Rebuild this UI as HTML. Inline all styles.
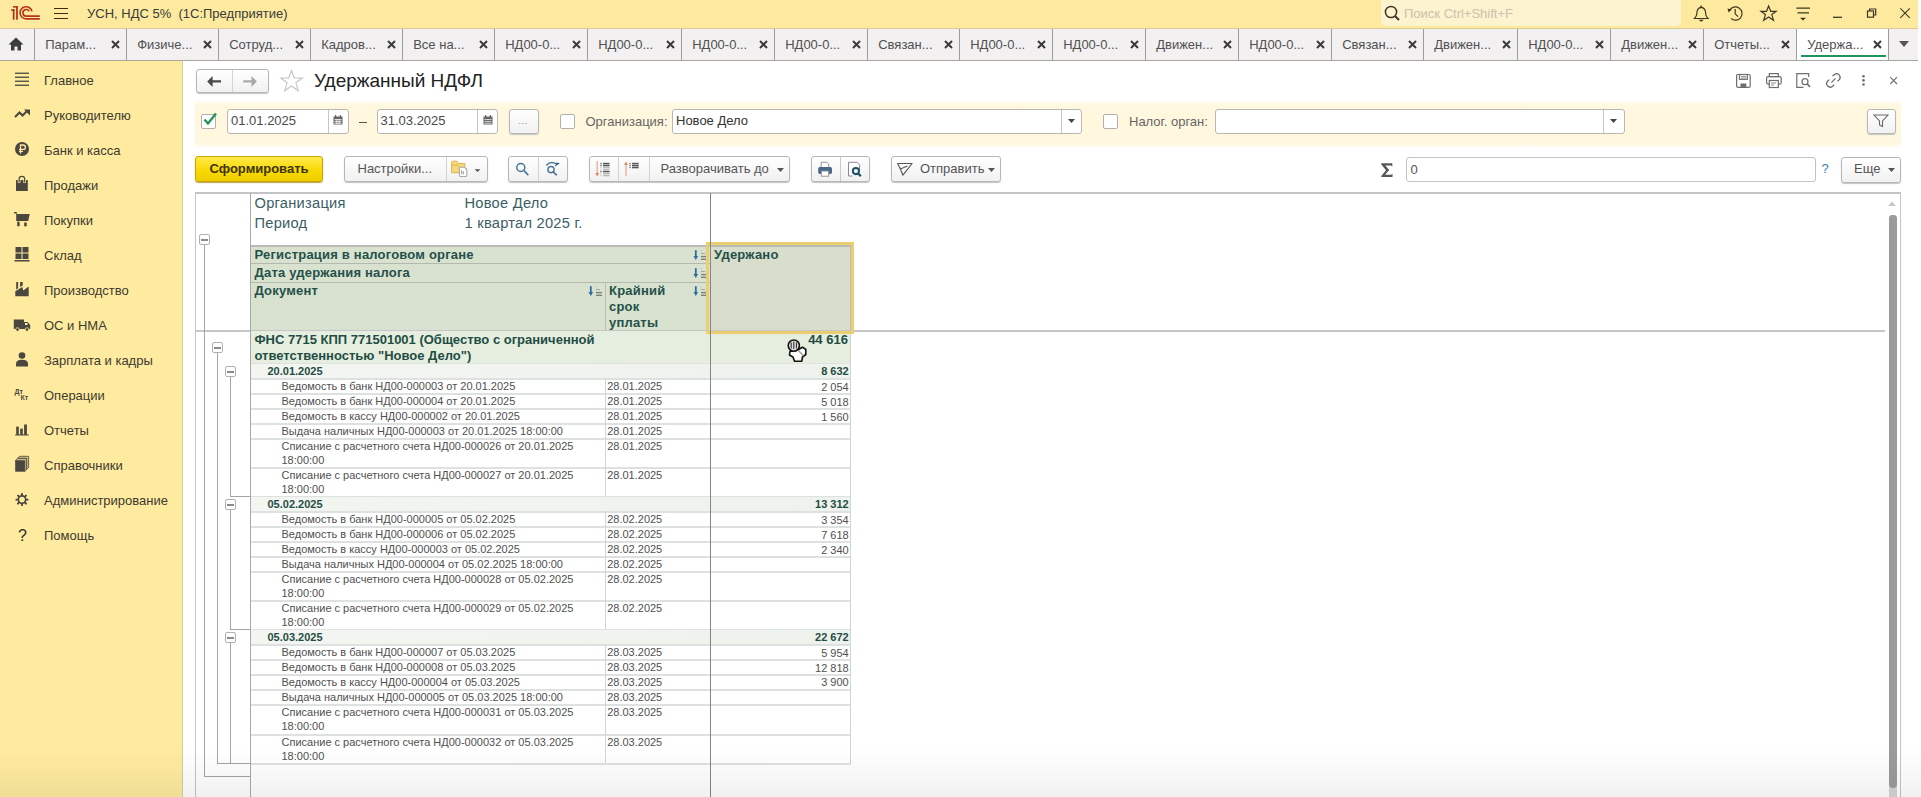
<!DOCTYPE html><html><head><meta charset="utf-8"><style>*{box-sizing:border-box;margin:0;padding:0}
html,body{width:1921px;height:797px;overflow:hidden;background:#fff;font-family:"Liberation Sans",sans-serif;color:#333}
.a{position:absolute}
svg{display:block}
#title{left:0;top:0;width:1918px;height:28px;background:#fdea9e}
#tabs{left:0;top:28px;width:1918px;height:33px;background:#f2f0f1;border-top:1px solid #d9cb92;border-bottom:1px solid #a9a69c}
.tab{position:absolute;top:0;height:31px;font-size:13px;color:#505050}
.tab:before{content:"";position:absolute;left:-1px;top:0;width:1px;height:31px;background:#9d9d9f}
.tab.act{background:#fff}
.tab .tt{position:absolute;left:10.2px;top:8px;white-space:nowrap}
.tab .tx{position:absolute;right:7px;top:11px}
#side{left:0;top:61px;width:183px;height:736px;background:#ffeb9f;border-right:1px solid #d6cc9e}
.si{position:absolute;left:44px;font-size:13px;color:#3d3a30;white-space:nowrap;margin-top:0.5px}
#filter{left:195px;top:101px;width:1706px;height:46px;background:linear-gradient(#fffdf5,#fff8de 5px,#fff8de 40px,#fffbec)}
.inp{position:absolute;background:#fff;border:1px solid #b9b6b4;border-radius:3px;font-size:13px;color:#444;white-space:nowrap}
.btn{position:absolute;border:1px solid #b7b7b9;border-radius:3px;background:linear-gradient(#fff,#f1f1f1);box-shadow:0 1px 1px #c4c4c4;font-size:13px;color:#444;white-space:nowrap}
.chk{position:absolute;width:15px;height:15px;border:1px solid #b2b0ae;border-radius:2px;background:#fff}
.lbl{position:absolute;font-size:13px;color:#666;white-space:nowrap}
.vd{position:absolute;top:0;bottom:0;width:1px;background:#c8c8ca}
.rh{position:absolute;font-size:14.67px;color:#3b5e64;white-space:nowrap;letter-spacing:0.25px}
.hc{position:absolute;font-size:13px;font-weight:bold;color:#24504a;white-space:nowrap;letter-spacing:0.2px}
.gt{position:absolute;font-size:13px;font-weight:bold;color:#1f4d44;white-space:nowrap;line-height:16px}
.dt{position:absolute;font-size:11px;font-weight:bold;color:#1f4d44;white-space:nowrap}
.rt{position:absolute;font-size:11px;color:#505050;white-space:nowrap;line-height:14px}
</style></head><body>
<div id="title" class="a">
  <svg class="a" style="left:0;top:0" width="46" height="26" viewBox="0 0 46 26">
    <g fill="#ad2f1b">
      <rect x="12.8" y="9.3" width="1.7" height="10.4"/><rect x="11.1" y="9.3" width="3.4" height="1.5"/>
      <rect x="16.1" y="6.1" width="1.7" height="13.6"/><rect x="13" y="6.1" width="4.8" height="1.5"/>
    </g>
    <g fill="none" stroke="#b6361d" stroke-width="1.6">
      <path d="M32 11.4 A6.05 6.05 0 1 0 26.15 18.85 H39.8"/>
      <path d="M29.2 11.4 A3.3 3.3 0 1 0 26.2 16.1 H39.8"/>
    </g>
  </svg>
  <div class="a" style="left:54px;top:8px;width:14px;height:1px;background:#3b2e12"></div>
  <div class="a" style="left:54px;top:13px;width:14px;height:1px;background:#3b2e12"></div>
  <div class="a" style="left:54px;top:18px;width:14px;height:1px;background:#3b2e12"></div>
  <div class="a" style="left:87px;top:6px;font-size:13px;color:#3a3a3a;white-space:pre">УСН, НДС 5%  (1С:Предприятие)</div>
  <div class="a" style="left:1381px;top:0;width:300px;height:26px;background:#fdf3cf;border-radius:0 0 5px 5px"></div>
  <svg class="a" style="left:1384px;top:5px" width="17" height="17" viewBox="0 0 17 17"><circle cx="7" cy="7" r="5.6" fill="none" stroke="#3b3526" stroke-width="1.5"/><path d="M11 11 L15 15" stroke="#3b3526" stroke-width="2"/></svg>
  <div class="a" style="left:1404px;top:6px;font-size:13px;color:#c9c2ad;white-space:nowrap">Поиск Ctrl+Shift+F</div>
<svg class="a" style="left:1685px;top:0" width="233" height="28" viewBox="1685 0 233 28">
  <g fill="none" stroke="#3e3726" stroke-width="1.2">
   <!-- bell -->
   <path d="M1694.5 18.5 H1708 Q1705.8 16.5 1705.6 13.5 V12.5 Q1705.3 8 1701.2 7.4 Q1697.2 8 1696.9 12.5 V13.5 Q1696.7 16.5 1694.5 18.5 Z"/>
   <circle cx="1701.2" cy="6.5" r="0.9" fill="#3e3726" stroke="none"/>
   <!-- history -->
   <path d="M1729.6 10.5 A6.6 6.6 0 1 1 1731 18.4"/>
   <path d="M1735.2 9 V13.8 L1738 16.6"/>
   <!-- star -->
   <path d="M1768.6 6 L1770.7 11.3 H1776.2 L1771.8 14.6 L1773.5 20.3 L1768.6 16.9 L1763.7 20.3 L1765.4 14.6 L1761 11.3 H1766.5 Z"/>
   <!-- filter list -->
   <path d="M1796.3 8.2 H1810 M1797.5 12.8 H1809"/>
   <!-- minimize -->
   <path d="M1833 17.3 H1842" stroke-width="1.3"/>
   <!-- restore -->
   <rect x="1867.5" y="11" width="6" height="6.2"/>
   <path d="M1869.6 11 V9 H1875.7 V15 H1873.5"/>
   <!-- close -->
   <path d="M1900.3 8.3 L1909.8 17.8 M1909.8 8.3 L1900.3 17.8" stroke-width="1.1"/>
  </g>
  <g fill="#3e3726">
   <path d="M1698.5 19.8 H1704 L1701.2 21.8 Z"/>
   <path d="M1727.5 8.6 L1731.8 9.6 L1728.6 12.6 Z"/>
   <path d="M1800 17.8 H1806 L1803 20.6 Z"/>
  </g>
 </svg>
</div>

<div id="tabs" class="a">
<svg class="a" style="left:8px;top:8px" width="16" height="14" viewBox="0 0 16 14"><path d="M8 0.5 L15.5 7.5 H13 V13.5 H9.5 V9.5 H6.5 V13.5 H3 V7.5 H0.5 Z" fill="#3d3d3f"/></svg>
<div class="tab" style="left:35px;width:92px">
<span class="tt">Парам...</span>
<svg class="tx" width="9" height="9" viewBox="0 0 9 9"><path d="M1 1 L8 8 M8 1 L1 8" stroke="#3a3a3a" stroke-width="2"/></svg>
</div>
<div class="tab" style="left:127px;width:92px">
<span class="tt">Физиче...</span>
<svg class="tx" width="9" height="9" viewBox="0 0 9 9"><path d="M1 1 L8 8 M8 1 L1 8" stroke="#3a3a3a" stroke-width="2"/></svg>
</div>
<div class="tab" style="left:219px;width:92px">
<span class="tt">Сотруд...</span>
<svg class="tx" width="9" height="9" viewBox="0 0 9 9"><path d="M1 1 L8 8 M8 1 L1 8" stroke="#3a3a3a" stroke-width="2"/></svg>
</div>
<div class="tab" style="left:311px;width:92px">
<span class="tt">Кадров...</span>
<svg class="tx" width="9" height="9" viewBox="0 0 9 9"><path d="M1 1 L8 8 M8 1 L1 8" stroke="#3a3a3a" stroke-width="2"/></svg>
</div>
<div class="tab" style="left:403px;width:92px">
<span class="tt">Все на...</span>
<svg class="tx" width="9" height="9" viewBox="0 0 9 9"><path d="M1 1 L8 8 M8 1 L1 8" stroke="#3a3a3a" stroke-width="2"/></svg>
</div>
<div class="tab" style="left:495px;width:93px">
<span class="tt">НД00-0...</span>
<svg class="tx" width="9" height="9" viewBox="0 0 9 9"><path d="M1 1 L8 8 M8 1 L1 8" stroke="#3a3a3a" stroke-width="2"/></svg>
</div>
<div class="tab" style="left:588px;width:94px">
<span class="tt">НД00-0...</span>
<svg class="tx" width="9" height="9" viewBox="0 0 9 9"><path d="M1 1 L8 8 M8 1 L1 8" stroke="#3a3a3a" stroke-width="2"/></svg>
</div>
<div class="tab" style="left:682px;width:93px">
<span class="tt">НД00-0...</span>
<svg class="tx" width="9" height="9" viewBox="0 0 9 9"><path d="M1 1 L8 8 M8 1 L1 8" stroke="#3a3a3a" stroke-width="2"/></svg>
</div>
<div class="tab" style="left:775px;width:93px">
<span class="tt">НД00-0...</span>
<svg class="tx" width="9" height="9" viewBox="0 0 9 9"><path d="M1 1 L8 8 M8 1 L1 8" stroke="#3a3a3a" stroke-width="2"/></svg>
</div>
<div class="tab" style="left:868px;width:92px">
<span class="tt">Связан...</span>
<svg class="tx" width="9" height="9" viewBox="0 0 9 9"><path d="M1 1 L8 8 M8 1 L1 8" stroke="#3a3a3a" stroke-width="2"/></svg>
</div>
<div class="tab" style="left:960px;width:93px">
<span class="tt">НД00-0...</span>
<svg class="tx" width="9" height="9" viewBox="0 0 9 9"><path d="M1 1 L8 8 M8 1 L1 8" stroke="#3a3a3a" stroke-width="2"/></svg>
</div>
<div class="tab" style="left:1053px;width:93px">
<span class="tt">НД00-0...</span>
<svg class="tx" width="9" height="9" viewBox="0 0 9 9"><path d="M1 1 L8 8 M8 1 L1 8" stroke="#3a3a3a" stroke-width="2"/></svg>
</div>
<div class="tab" style="left:1146px;width:93px">
<span class="tt">Движен...</span>
<svg class="tx" width="9" height="9" viewBox="0 0 9 9"><path d="M1 1 L8 8 M8 1 L1 8" stroke="#3a3a3a" stroke-width="2"/></svg>
</div>
<div class="tab" style="left:1239px;width:93px">
<span class="tt">НД00-0...</span>
<svg class="tx" width="9" height="9" viewBox="0 0 9 9"><path d="M1 1 L8 8 M8 1 L1 8" stroke="#3a3a3a" stroke-width="2"/></svg>
</div>
<div class="tab" style="left:1332px;width:92px">
<span class="tt">Связан...</span>
<svg class="tx" width="9" height="9" viewBox="0 0 9 9"><path d="M1 1 L8 8 M8 1 L1 8" stroke="#3a3a3a" stroke-width="2"/></svg>
</div>
<div class="tab" style="left:1424px;width:94px">
<span class="tt">Движен...</span>
<svg class="tx" width="9" height="9" viewBox="0 0 9 9"><path d="M1 1 L8 8 M8 1 L1 8" stroke="#3a3a3a" stroke-width="2"/></svg>
</div>
<div class="tab" style="left:1518px;width:93px">
<span class="tt">НД00-0...</span>
<svg class="tx" width="9" height="9" viewBox="0 0 9 9"><path d="M1 1 L8 8 M8 1 L1 8" stroke="#3a3a3a" stroke-width="2"/></svg>
</div>
<div class="tab" style="left:1611px;width:93px">
<span class="tt">Движен...</span>
<svg class="tx" width="9" height="9" viewBox="0 0 9 9"><path d="M1 1 L8 8 M8 1 L1 8" stroke="#3a3a3a" stroke-width="2"/></svg>
</div>
<div class="tab" style="left:1704px;width:93px">
<span class="tt">Отчеты...</span>
<svg class="tx" width="9" height="9" viewBox="0 0 9 9"><path d="M1 1 L8 8 M8 1 L1 8" stroke="#3a3a3a" stroke-width="2"/></svg>
</div>
<div class="tab act" style="left:1797px;width:92px">
<span class="tt">Удержа...</span>
<svg class="tx" width="9" height="9" viewBox="0 0 9 9"><path d="M1 1 L8 8 M8 1 L1 8" stroke="#3a3a3a" stroke-width="2"/></svg>
<div class="a" style="left:4px;top:26px;width:85px;height:2px;background:#23935c"></div>
</div>
<div class="tab" style="left:1889px;width:29px"><svg class="a" style="left:10px;top:12px" width="10" height="6" viewBox="0 0 10 6"><path d="M0 0 H10 L5 6Z" fill="#555"/></svg></div>
</div>
<div id="side" class="a">
<!-- icons: coordinates relative to sidebar (top=61) -->
<svg class="a" style="left:0;top:0" width="183" height="500" viewBox="0 61 183 500">
 <g fill="#4a4640" stroke="none">
  <!-- Главное -->
  <rect x="15" y="72.6" width="14" height="1.3"/><rect x="15" y="76.6" width="14" height="1.3"/><rect x="15" y="80.6" width="14" height="1.3"/><rect x="15" y="84.6" width="14" height="1.3"/>
  <!-- Руководителю -->
  <path d="M15 117 L19.5 112.5 L22.5 115.5 L26.5 111.5" fill="none" stroke="#4a4640" stroke-width="2"/>
  <path d="M24 109.5 H30 V115.5 Z"/>
  <!-- Банк -->
  <circle cx="22" cy="149" r="7"/>
  <path d="M20.5 153.5 V145 H23.2 A2.2 2.2 0 0 1 23.2 149.4 H19 M19 151.3 H23" fill="none" stroke="#ffeb9f" stroke-width="1.3"/>
  <!-- Продажи -->
  <rect x="16" y="180.1" width="11.8" height="10.9"/>
  <path d="M19.1 183 V179.2 A2.8 2.8 0 0 1 24.7 179.2 V183" fill="none" stroke="#ffeb9f" stroke-width="2.6"/>
  <path d="M19.1 182.6 V179.2 A2.8 2.8 0 0 1 24.7 179.2 V182.6" fill="none" stroke="#4a4640" stroke-width="1.2"/>
  <!-- Покупки -->
  <path d="M14.1 212 H16.8 V214.1 H29.7 L28.2 221 H16.2 V213.6 H14.1 Z"/>
  <rect x="17.2" y="221.6" width="2.4" height="4.6"/><rect x="24.2" y="222.5" width="2.5" height="3.8"/>
  <!-- Склад -->
  <rect x="15.5" y="247" width="6" height="5.5"/><rect x="22.5" y="247" width="6" height="5.5"/>
  <rect x="15.5" y="253.5" width="6" height="5.5"/><rect x="22.5" y="253.5" width="6" height="5.5"/>
  <rect x="14.5" y="260" width="15" height="1.5"/>
  <!-- Производство -->
  <path d="M15.3 296.3 V291.2 L22.3 287 L23.3 290.6 L28.7 286.4 V296.3 Z"/>
  <path d="M16.2 282 H18.1 V288.2 L16.2 289.4 Z"/>
  <path d="M20.1 282 H22.7 V285.5 L20.1 287 Z"/>
  <!-- ОС и НМА -->
  <path d="M13.8 319.5 H24 V322 H27.5 L30.2 325 V329 H13.8 Z"/>
  <circle cx="17.5" cy="329.5" r="1.8" stroke="#ffeb9f" stroke-width="0.8"/><circle cx="27" cy="329.5" r="1.8" stroke="#ffeb9f" stroke-width="0.8"/>
  <rect x="25" y="323" width="2.5" height="2" fill="#ffeb9f"/>
  <!-- Зарплата -->
  <circle cx="22" cy="355.5" r="3.3"/>
  <path d="M16 366.5 V364 Q16 359.8 22 359.8 Q28 359.8 28 364 V366.5 Z"/>
  <!-- Операции -->
  <text x="14.5" y="394" font-size="7" font-weight="bold" font-family="Liberation Sans" fill="#4a4640">Дт</text>
  <text x="20.5" y="400" font-size="7" font-weight="bold" font-family="Liberation Sans" fill="#4a4640">Кт</text>
  <!-- Отчеты -->
  <rect x="16.2" y="426.6" width="2.6" height="8.3"/><rect x="20.2" y="428.6" width="2.6" height="6.3"/><rect x="24.1" y="424.5" width="2.8" height="10.4"/>
  <rect x="15.2" y="434.4" width="13.4" height="1.1"/>
  <!-- Справочники -->
  <path d="M19.8 456.3 H28.6 V467.5 L26.6 469.2 V458.3 H17.5 Z" fill="#d9c78a" stroke="#4a4640" stroke-width="0.8"/>
  <path d="M17.6 458.4 H26.6 V469.6 L24.8 471.5 V460.7 H15.2 Z" fill="#c9b986" stroke="#4a4640" stroke-width="0.8"/>
  <rect x="15.2" y="460.7" width="9.6" height="11"/>
  <!-- Администрирование -->
  <g transform="translate(22 499.6)"><circle r="3.7" fill="none" stroke="#4a4640" stroke-width="1.7"/><rect x="-0.95" y="-6.5" width="1.9" height="3.2" rx="0.6" transform="rotate(0)"/><rect x="-0.95" y="-6.5" width="1.9" height="3.2" rx="0.6" transform="rotate(45)"/><rect x="-0.95" y="-6.5" width="1.9" height="3.2" rx="0.6" transform="rotate(90)"/><rect x="-0.95" y="-6.5" width="1.9" height="3.2" rx="0.6" transform="rotate(135)"/><rect x="-0.95" y="-6.5" width="1.9" height="3.2" rx="0.6" transform="rotate(180)"/><rect x="-0.95" y="-6.5" width="1.9" height="3.2" rx="0.6" transform="rotate(225)"/><rect x="-0.95" y="-6.5" width="1.9" height="3.2" rx="0.6" transform="rotate(270)"/><rect x="-0.95" y="-6.5" width="1.9" height="3.2" rx="0.6" transform="rotate(315)"/></g>
 </g>
</svg>
<div class="a" style="left:18px;top:466px;font-size:16px;color:#2a2a2a;font-weight:normal">?</div>
<div class="si" style="top:11.2px">Главное</div>
<div class="si" style="top:46.2px">Руководителю</div>
<div class="si" style="top:81.2px">Банк и касса</div>
<div class="si" style="top:116.2px">Продажи</div>
<div class="si" style="top:151.2px">Покупки</div>
<div class="si" style="top:186.2px">Склад</div>
<div class="si" style="top:221.2px">Производство</div>
<div class="si" style="top:256.2px">ОС и НМА</div>
<div class="si" style="top:291.2px">Зарплата и кадры</div>
<div class="si" style="top:326.2px">Операции</div>
<div class="si" style="top:361.2px">Отчеты</div>
<div class="si" style="top:396.2px">Справочники</div>
<div class="si" style="top:431.2px">Администрирование</div>
<div class="si" style="top:466.2px">Помощь</div>
</div>

<!-- nav buttons -->
<div class="btn" style="left:196px;top:69px;width:73px;height:24px;border-radius:3px"></div>
<div class="a" style="left:232px;top:70px;width:1px;height:22px;background:#d4d4d6"></div>
<svg class="a" style="left:206px;top:75px" width="16" height="13" viewBox="0 0 16 13"><path d="M1.2 6.4 L6.6 1 V5.2 H15 V7.6 H6.6 V11.9 Z" fill="#4a4a4c"/></svg>
<svg class="a" style="left:242px;top:75px" width="16" height="13" viewBox="0 0 16 13"><path d="M14.9 6.4 L9.5 1 V5.2 H1.2 V7.6 H9.5 V11.9 Z" fill="#a9a9ab"/></svg>
<!-- star -->
<svg class="a" style="left:279px;top:69px" width="25" height="24" viewBox="0 0 25 24"><path d="M12.5 1.5 L15.3 9 H23.3 L16.9 13.8 L19.3 21.8 L12.5 17 L5.7 21.8 L8.1 13.8 L1.7 9 H9.7 Z" fill="none" stroke="#c4c4c6" stroke-width="1.1"/></svg>
<!-- title -->
<div class="a" style="left:314px;top:70.4px;font-size:19px;color:#222;white-space:nowrap">Удержанный НДФЛ</div>
<!-- right icons -->
<svg class="a" style="left:1730px;top:68px" width="175" height="26" viewBox="1730 68 175 26">
 <g fill="none" stroke="#6e6e70" stroke-width="1.2">
  <!-- save -->
  <rect x="1736.6" y="74.5" width="13.6" height="12.8" rx="1.2"/>
  <rect x="1739.5" y="74.5" width="7.8" height="4.8"/>
  <path d="M1741 76.5 H1746 M1741 78 H1746" stroke-width="0.7"/>
  <rect x="1740.5" y="83.5" width="5.8" height="3.8" fill="#6e6e70" stroke="none"/>
  <!-- print -->
  <rect x="1769.3" y="73.6" width="9" height="3"/>
  <rect x="1766.6" y="76.6" width="14.6" height="7.5" rx="1.5"/>
  <rect x="1769.3" y="80.5" width="9" height="7" fill="#fff"/>
  <path d="M1771 83 H1776 M1771 85 H1774" stroke-width="0.8"/>
  <!-- preview -->
  <path d="M1808.7 77 V73.6 H1796.8 V87.4 H1803.5"/>
  <circle cx="1805" cy="81.7" r="3"/>
  <path d="M1807.2 84 L1810 86.9" stroke-width="1.6"/>
  <!-- link -->
  <path d="M1829.2 79.6 L1827.6 81.2 A3.54 3.54 0 0 0 1832.6 86.2 L1834.2 84.6" stroke-width="1.3"/>
  <path d="M1832.5 76.1 L1834.46 74.44 A3.6 3.6 0 0 1 1839.46 79.44 L1837.6 81.3" stroke-width="1.3"/>
  <path d="M1831.4 82.6 L1835.5 78.3" stroke-width="1.2"/>
  <!-- close -->
  <path d="M1890.3 77.2 L1897 84 M1897 77.2 L1890.3 84" stroke-width="1.1"/>
 </g>
 <g fill="#6e6e70"><circle cx="1863.5" cy="76.3" r="1.3"/><circle cx="1863.5" cy="80.4" r="1.3"/><circle cx="1863.5" cy="84.5" r="1.3"/></g>
</svg>
<!-- FILTER PANEL -->
<div id="filter" class="a"></div>
<div class="chk" style="left:201px;top:114px"></div>
<svg class="a" style="left:202px;top:111px" width="16" height="16" viewBox="0 0 16 16"><path d="M2.5 8.5 L6 12.5 L14 2.5" fill="none" stroke="#22955a" stroke-width="2.4"/></svg>
<div class="inp" style="left:227px;top:109px;width:122px;height:25px"><span class="a" style="left:3px;top:3.3px;color:#4a4a4a">01.01.2025</span></div>
<div class="a" style="left:327.5px;top:110px;width:1px;height:23px;background:#c6c6c6"></div>
<svg class="a" style="left:333px;top:115px" width="10" height="10" viewBox="0 0 10 10"><rect x="0.5" y="1.5" width="9" height="8" fill="#666"/><path d="M1.5 4.5 H8.5 M1.5 6.5 H8.5 M1.5 8.3 H8.5 M3.3 4 V9 M5 4 V9 M6.8 4 V9" stroke="#fff" stroke-width="0.7"/><rect x="2" y="0" width="1.2" height="2.5" fill="#666"/><rect x="6.8" y="0" width="1.2" height="2.5" fill="#666"/></svg>
<div class="a" style="left:359px;top:121.5px;width:8px;height:1.3px;background:#555"></div>
<div class="inp" style="left:376.5px;top:109px;width:121.5px;height:25px"><span class="a" style="left:3px;top:3.3px;color:#4a4a4a">31.03.2025</span></div>
<div class="a" style="left:477px;top:110px;width:1px;height:23px;background:#c6c6c6"></div>
<svg class="a" style="left:482.5px;top:115px" width="10" height="10" viewBox="0 0 10 10"><rect x="0.5" y="1.5" width="9" height="8" fill="#666"/><path d="M1.5 4.5 H8.5 M1.5 6.5 H8.5 M1.5 8.3 H8.5" stroke="#fff" stroke-width="0.7"/><rect x="2" y="0" width="1.2" height="2.5" fill="#666"/><rect x="6.8" y="0" width="1.2" height="2.5" fill="#666"/></svg>
<div class="btn" style="left:508.5px;top:108.5px;width:30px;height:25px"><span class="a" style="left:9px;top:6px;font-size:9px;color:#777;letter-spacing:0.5px">...</span></div>
<div class="chk" style="left:559.5px;top:114px"></div>
<div class="lbl" style="left:585.5px;top:114px">Организация:</div>
<div class="inp" style="left:672px;top:109px;width:410px;height:25px"><span class="a" style="left:3px;top:3.3px;color:#333">Новое Дело</span></div>
<div class="a" style="left:1060.5px;top:110px;width:1px;height:23px;background:#c6c6c6"></div>
<svg class="a" style="left:1068px;top:119px" width="7" height="4" viewBox="0 0 7 4"><path d="M0 0 H7 L3.5 4Z" fill="#444"/></svg>
<div class="chk" style="left:1103px;top:114px"></div>
<div class="lbl" style="left:1129px;top:114px">Налог. орган:</div>
<div class="inp" style="left:1214.5px;top:109px;width:410px;height:25px"></div>
<div class="a" style="left:1603px;top:110px;width:1px;height:23px;background:#c6c6c6"></div>
<svg class="a" style="left:1610px;top:119px" width="7" height="4" viewBox="0 0 7 4"><path d="M0 0 H7 L3.5 4Z" fill="#444"/></svg>
<div class="btn" style="left:1866.5px;top:108.5px;width:29px;height:25px"></div>
<svg class="a" style="left:1873px;top:114px" width="16" height="14" viewBox="0 0 16 14"><path d="M1 1 H15 L9.5 7 V12.5 L6.5 11 V7 Z" fill="none" stroke="#6a6a6c" stroke-width="1.1"/></svg>
<!-- TOOLBAR -->
<div class="a" style="left:195px;top:156px;width:128px;height:26px;border:1px solid #c9a700;border-radius:3px;background:linear-gradient(#ffe94a,#f8d800 60%,#f0cc00);box-shadow:0 1px 1px #b9a450"></div>
<div class="a" style="left:209.5px;top:161px;font-size:13px;font-weight:bold;color:#3b3300;white-space:nowrap">Сформировать</div>
<div class="btn" style="left:343.5px;top:156px;width:144px;height:26px"></div>
<div class="a" style="left:446px;top:157px;width:1px;height:24px;background:#d2d2d4"></div>
<div class="a" style="left:357.5px;top:161px;font-size:13px;color:#555;white-space:nowrap">Настройки...</div>
<svg class="a" style="left:446px;top:158px" width="42" height="22" viewBox="446 158 42 22">
 <path d="M451.6 172.7 V162.6 Q451.6 161.2 453 161.2 H456.2 Q457.4 161.2 458 162.6 L458.4 163.5 H464.9 V172.7 Z" fill="#f6d877" stroke="#d8b04e" stroke-width="0.9"/>
 <path d="M451.6 165.2 H458.4" stroke="#d8b04e" stroke-width="0.8"/>
 <path d="M459.4 167.3 H464.6 L466.8 169.5 V175.4 Q466.8 176.5 465.7 176.5 H460.5 Q459.4 176.5 459.4 175.4 Z" fill="#fff" stroke="#a9a9ad" stroke-width="1.1"/>
 <rect x="461.2" y="170.3" width="0.9" height="4" fill="#d77"/><rect x="462.6" y="171.2" width="1.4" height="3.1" fill="#9b9"/>
 <path d="M474.7 169.2 H480.3 L477.5 172.1 Z" fill="#505050"/>
</svg>
<div class="btn" style="left:508px;top:156px;width:60px;height:26px"></div>
<div class="a" style="left:538px;top:157px;width:1px;height:24px;background:#d2d2d4"></div>
<svg class="a" style="left:508px;top:158px" width="60" height="22" viewBox="508 158 60 22">
 <circle cx="520.8" cy="167.5" r="4" fill="#f4fbff" stroke="#4b7291" stroke-width="1.5"/>
 <path d="M523.8 170.5 L527.8 174.6" stroke="#4b7291" stroke-width="1.7" stroke-linecap="round"/>
 <circle cx="551" cy="169.6" r="3.1" fill="#f4fbff" stroke="#4b7291" stroke-width="1.4"/>
 <path d="M553.2 171.9 L556.4 174.8" stroke="#4b7291" stroke-width="1.6" stroke-linecap="round"/>
 <path d="M546.6 165 Q551 160.5 556.5 164" fill="none" stroke="#4b7291" stroke-width="1.4" stroke-linecap="round"/>
 <path d="M554.8 166.8 L559.8 163.2 L556.6 162.4 Z" fill="#2f5f83"/>
</svg>

<div class="btn" style="left:588.5px;top:156px;width:201px;height:26px"></div>
<div class="a" style="left:618px;top:157px;width:1px;height:24px;background:#d2d2d4"></div>
<div class="a" style="left:648.5px;top:157px;width:1px;height:24px;background:#d2d2d4"></div>
<svg class="a" style="left:590px;top:158px" width="60" height="22" viewBox="590 158 60 22"><path d="M597.2 161 V174" stroke="#e6a48a" stroke-width="1.2"/><path d="M595.2 173 H599.2 L597.2 176.4 Z" fill="#e08a68"/><rect x="600.3" y="162.9" width="1.3" height="1.3" fill="#666"/><rect x="600.3" y="164.9" width="1.3" height="1.3" fill="#666"/><rect x="600.3" y="170.9" width="1.3" height="1.3" fill="#666"/><rect x="600.3" y="166.9" width="1.3" height="1.3" fill="#ccc"/><rect x="600.3" y="168.9" width="1.3" height="1.3" fill="#ccc"/><rect x="600.3" y="172.9" width="1.3" height="1.3" fill="#ccc"/><rect x="600.3" y="174.9" width="1.3" height="1.3" fill="#ccc"/><rect x="603" y="162.8" width="6.6" height="1.5" fill="#555"/><rect x="603" y="164.8" width="6.6" height="1.5" fill="#555"/><rect x="603" y="170.8" width="6.6" height="1.5" fill="#555"/><rect x="603" y="166.8" width="6.6" height="1.5" fill="#bdbdbd"/><rect x="603" y="168.8" width="6.6" height="1.5" fill="#bdbdbd"/><rect x="603" y="172.8" width="6.6" height="1.5" fill="#bdbdbd"/><rect x="603" y="174.8" width="6.6" height="1.5" fill="#bdbdbd"/><path d="M626 162.5 V176" stroke="#e6a48a" stroke-width="1.2"/><path d="M624 164.9 H628 L626 161.5 Z" fill="#e08a68"/><rect x="629.4" y="162.9" width="1.3" height="1.3" fill="#666"/><rect x="629.4" y="164.9" width="1.3" height="1.3" fill="#666"/><rect x="629.4" y="166.9" width="1.3" height="1.3" fill="#666"/><rect x="632" y="162.8" width="6.7" height="1.5" fill="#555"/><rect x="632" y="164.8" width="6.7" height="1.5" fill="#555"/><rect x="632" y="166.8" width="6.7" height="1.5" fill="#555"/></svg>

<div class="a" style="left:660.5px;top:161px;font-size:13px;color:#555;white-space:nowrap">Разворачивать до</div>
<svg class="a" style="left:777px;top:168px" width="7" height="4" viewBox="0 0 7 4"><path d="M0 0 H7 L3.5 4Z" fill="#555"/></svg>
<div class="btn" style="left:810.5px;top:156px;width:59px;height:26px"></div>
<div class="a" style="left:840px;top:157px;width:1px;height:24px;background:#c9c9cb"></div>
<svg class="a" style="left:812px;top:158px" width="60" height="22" viewBox="812 158 60 22">
 <path d="M821.2 167.5 V162.3 H826.8 L828.7 164.2 V167.5" fill="#fff" stroke="#8a8a90" stroke-width="0.9"/>
 <rect x="818.2" y="167" width="13.8" height="6.9" rx="1.6" fill="#4a6a8a"/>
 <rect x="821.3" y="171" width="7.4" height="5.2" fill="#fff" stroke="#8a8a90" stroke-width="0.9"/>
 <path d="M859.6 170 V164.8 L857.2 162.3 H848.5 V176 H852.5" fill="#fff" stroke="#8a8a90" stroke-width="1"/>
 <circle cx="855.9" cy="171.1" r="3.1" fill="#e6f6fc" stroke="#1f4d63" stroke-width="1.9"/>
 <path d="M858.2 173.5 L860.8 176.3" stroke="#1f4d63" stroke-width="2.2"/>
</svg>
<div class="btn" style="left:890.5px;top:156px;width:110px;height:26px"></div>
<svg class="a" style="left:892px;top:158px" width="30" height="22" viewBox="892 158 30 22"><path d="M897.6 163.5 H912.1 L902.9 175.2 L900.4 169 Z M900.4 169 L906.8 166.2" fill="none" stroke="#585858" stroke-width="1.15" stroke-linejoin="round" stroke-linecap="round"/></svg>
<div class="a" style="left:920px;top:161px;font-size:13px;color:#555;white-space:nowrap">Отправить</div>
<svg class="a" style="left:987.5px;top:168px" width="7" height="4" viewBox="0 0 7 4"><path d="M0 0 H7 L3.5 4Z" fill="#555"/></svg>
<!-- sigma -->
<svg class="a" style="left:1380px;top:162px" width="14" height="17" viewBox="1380 162 14 17"><path d="M1381.3 163.2 H1392.3 V166.8 L1391.2 165.6 H1385.3 L1389.2 170 L1385 174.8 H1391.3 L1392.5 173.4 V177.1 H1381.3 V175.9 L1386 170.2 L1381.3 164.5 Z" fill="#575757"/></svg>
<div class="inp" style="left:1405.5px;top:157px;width:410px;height:25px;border-color:#c2c2c4"><span class="a" style="left:4px;top:4px;color:#555">0</span></div>
<div class="a" style="left:1821.5px;top:161px;font-size:13px;color:#3d7fb0">?</div>
<div class="btn" style="left:1840.5px;top:156.5px;width:60px;height:26px"></div>
<div class="a" style="left:1854px;top:161px;font-size:13px;color:#555;white-space:nowrap">Еще</div>
<svg class="a" style="left:1887.5px;top:168px" width="7" height="4" viewBox="0 0 7 4"><path d="M0 0 H7 L3.5 4Z" fill="#555"/></svg>

<div class="a" style="left:195px;top:192px;width:1706px;height:605px;border:1px solid #c4c4c6;border-bottom:none;background:#fff"></div>
<div class="a" style="left:195px;top:192px;width:1706px;height:1.5px;background:#c4c4c6"></div>
<div class="rh" style="left:254.5px;top:194.6px">Организация</div>
<div class="rh" style="left:464.5px;top:194.6px">Новое Дело</div>
<div class="rh" style="left:254.5px;top:214.6px">Период</div>
<div class="rh" style="left:464.5px;top:214.6px">1 квартал 2025 г.</div>
<div class="a" style="left:251px;top:245px;width:459px;height:86px;background:#d9e2cf"></div>
<div class="a" style="left:251px;top:245px;width:459px;height:1.6px;background:#b9bdb5"></div>
<div class="a" style="left:251px;top:263px;width:459px;height:1px;background:#b4b9b0"></div>
<div class="a" style="left:251px;top:281.5px;width:459px;height:1px;background:#b4b9b0"></div>
<div class="a" style="left:605px;top:282px;width:1px;height:49px;background:#b9bdb5"></div>
<div class="hc" style="left:254.5px;top:246.5px">Регистрация в налоговом органе</div>
<div class="hc" style="left:254.5px;top:265px">Дата удержания налога</div>
<div class="hc" style="left:254.5px;top:283px">Документ</div>
<div class="hc" style="left:609px;top:283px;line-height:16px">Крайний<br>срок<br>уплаты</div>
<svg class="a" style="left:692px;top:249px" width="16" height="12" viewBox="0 0 16 12"><path d="M3.8 1.2 V8" stroke="#2c6ea3" stroke-width="1.8"/><path d="M1.5 7 L3.8 11 L6.1 7Z" fill="#2c6ea3"/><rect x="9" y="1.3" width="1" height="0.9" fill="#bbb"/><rect x="9" y="4" width="4" height="1" fill="#a5a5a5"/><rect x="9" y="6.9" width="6" height="1.4" fill="#808080"/><rect x="9" y="9.6" width="6" height="1.4" fill="#808080"/></svg>
<svg class="a" style="left:692px;top:267px" width="16" height="12" viewBox="0 0 16 12"><path d="M3.8 1.2 V8" stroke="#2c6ea3" stroke-width="1.8"/><path d="M1.5 7 L3.8 11 L6.1 7Z" fill="#2c6ea3"/><rect x="9" y="1.3" width="1" height="0.9" fill="#bbb"/><rect x="9" y="4" width="4" height="1" fill="#a5a5a5"/><rect x="9" y="6.9" width="6" height="1.4" fill="#808080"/><rect x="9" y="9.6" width="6" height="1.4" fill="#808080"/></svg>
<svg class="a" style="left:692px;top:285px" width="16" height="12" viewBox="0 0 16 12"><path d="M3.8 1.2 V8" stroke="#2c6ea3" stroke-width="1.8"/><path d="M1.5 7 L3.8 11 L6.1 7Z" fill="#2c6ea3"/><rect x="9" y="1.3" width="1" height="0.9" fill="#bbb"/><rect x="9" y="4" width="4" height="1" fill="#a5a5a5"/><rect x="9" y="6.9" width="6" height="1.4" fill="#808080"/><rect x="9" y="9.6" width="6" height="1.4" fill="#808080"/></svg>
<svg class="a" style="left:587px;top:285px" width="16" height="12" viewBox="0 0 16 12"><path d="M3.8 1.2 V8" stroke="#2c6ea3" stroke-width="1.8"/><path d="M1.5 7 L3.8 11 L6.1 7Z" fill="#2c6ea3"/><rect x="9" y="1.3" width="1" height="0.9" fill="#bbb"/><rect x="9" y="4" width="4" height="1" fill="#a5a5a5"/><rect x="9" y="6.9" width="6" height="1.4" fill="#808080"/><rect x="9" y="9.6" width="6" height="1.4" fill="#808080"/></svg>
<div class="a" style="left:710px;top:245px;width:141px;height:86px;background:#d8ddcc"></div>
<div class="a" style="left:710px;top:245px;width:141px;height:1.6px;background:#b9bdb5"></div>
<div class="a" style="left:850px;top:245px;width:1px;height:86px;background:#b9bdb5"></div>
<div class="hc" style="left:714px;top:246.5px">Удержано</div>
<div class="a" style="left:196px;top:330px;width:1689px;height:1.5px;background:#c6c6c8"></div>
<div class="a" style="left:251px;top:331px;width:599.5px;height:32.60000000000002px;background:#e6eedf"></div>
<div class="gt" style="left:254.5px;top:332.2px">ФНС 7715 КПП 771501001 (Общество с ограниченной<br>ответственностью "Новое Дело")</div>
<div class="gt" style="right:1073.1px;top:332.2px">44 616</div>
<div class="a" style="left:251px;top:363px;width:599.5px;height:2px;background:#dde2e0"></div>
<div class="a" style="left:251px;top:363.6px;width:599.5px;height:15.199999999999989px;background:linear-gradient(90deg,#f3f5f1,#eef2ec)"></div>
<div class="dt" style="left:267.5px;top:364.90000000000003px">20.01.2025</div>
<div class="dt" style="right:1072.3px;top:364.90000000000003px">8 632</div>
<div class="a" style="left:251px;top:378px;width:599.5px;height:2px;background:#dde2e0"></div>
<div class="a" style="left:605px;top:378px;width:1px;height:15px;background:#d3d5d3"></div>
<div class="rt" style="left:281.5px;top:379.40000000000003px">Ведомость в банк НД00-000003 от 20.01.2025</div>
<div class="rt" style="left:607.2px;top:379.40000000000003px">28.01.2025</div>
<div class="rt" style="right:1072.3px;top:379.6px">2 054</div>
<div class="a" style="left:251px;top:393px;width:599.5px;height:2px;background:#dde2e0"></div>
<div class="a" style="left:605px;top:393px;width:1px;height:15px;background:#d3d5d3"></div>
<div class="rt" style="left:281.5px;top:394.40000000000003px">Ведомость в банк НД00-000004 от 20.01.2025</div>
<div class="rt" style="left:607.2px;top:394.40000000000003px">28.01.2025</div>
<div class="rt" style="right:1072.3px;top:394.6px">5 018</div>
<div class="a" style="left:251px;top:408px;width:599.5px;height:2px;background:#dde2e0"></div>
<div class="a" style="left:605px;top:408px;width:1px;height:15px;background:#d3d5d3"></div>
<div class="rt" style="left:281.5px;top:409.40000000000003px">Ведомость в кассу НД00-000002 от 20.01.2025</div>
<div class="rt" style="left:607.2px;top:409.40000000000003px">28.01.2025</div>
<div class="rt" style="right:1072.3px;top:409.6px">1 560</div>
<div class="a" style="left:251px;top:423px;width:599.5px;height:2px;background:#dde2e0"></div>
<div class="a" style="left:605px;top:423px;width:1px;height:15px;background:#d3d5d3"></div>
<div class="rt" style="left:281.5px;top:424.40000000000003px">Выдача наличных НД00-000003 от 20.01.2025 18:00:00</div>
<div class="rt" style="left:607.2px;top:424.40000000000003px">28.01.2025</div>
<div class="a" style="left:251px;top:438px;width:599.5px;height:2px;background:#dde2e0"></div>
<div class="a" style="left:605px;top:438px;width:1px;height:29px;background:#d3d5d3"></div>
<div class="rt" style="left:281.5px;top:439.20000000000005px">Списание с расчетного счета НД00-000026 от 20.01.2025<br>18:00:00</div>
<div class="rt" style="left:607.2px;top:439.20000000000005px">28.01.2025</div>
<div class="a" style="left:251px;top:467px;width:599.5px;height:2px;background:#dde2e0"></div>
<div class="a" style="left:605px;top:467px;width:1px;height:29px;background:#d3d5d3"></div>
<div class="rt" style="left:281.5px;top:468.20000000000005px">Списание с расчетного счета НД00-000027 от 20.01.2025<br>18:00:00</div>
<div class="rt" style="left:607.2px;top:468.20000000000005px">28.01.2025</div>
<div class="a" style="left:251px;top:496px;width:599.5px;height:2px;background:#dde2e0"></div>
<div class="a" style="left:251px;top:496.6px;width:599.5px;height:15.099999999999966px;background:linear-gradient(90deg,#f3f5f1,#eef2ec)"></div>
<div class="dt" style="left:267.5px;top:497.90000000000003px">05.02.2025</div>
<div class="dt" style="right:1072.3px;top:497.90000000000003px">13 312</div>
<div class="a" style="left:251px;top:511px;width:599.5px;height:2px;background:#dde2e0"></div>
<div class="a" style="left:605px;top:511px;width:1px;height:15px;background:#d3d5d3"></div>
<div class="rt" style="left:281.5px;top:512.3px">Ведомость в банк НД00-000005 от 05.02.2025</div>
<div class="rt" style="left:607.2px;top:512.3px">28.02.2025</div>
<div class="rt" style="right:1072.3px;top:512.5px">3 354</div>
<div class="a" style="left:251px;top:526px;width:599.5px;height:2px;background:#dde2e0"></div>
<div class="a" style="left:605px;top:526px;width:1px;height:15px;background:#d3d5d3"></div>
<div class="rt" style="left:281.5px;top:527.3000000000001px">Ведомость в банк НД00-000006 от 05.02.2025</div>
<div class="rt" style="left:607.2px;top:527.3000000000001px">28.02.2025</div>
<div class="rt" style="right:1072.3px;top:527.5px">7 618</div>
<div class="a" style="left:251px;top:541px;width:599.5px;height:2px;background:#dde2e0"></div>
<div class="a" style="left:605px;top:541px;width:1px;height:15px;background:#d3d5d3"></div>
<div class="rt" style="left:281.5px;top:542.3000000000001px">Ведомость в кассу НД00-000003 от 05.02.2025</div>
<div class="rt" style="left:607.2px;top:542.3000000000001px">28.02.2025</div>
<div class="rt" style="right:1072.3px;top:542.5px">2 340</div>
<div class="a" style="left:251px;top:556px;width:599.5px;height:2px;background:#dde2e0"></div>
<div class="a" style="left:605px;top:556px;width:1px;height:15px;background:#d3d5d3"></div>
<div class="rt" style="left:281.5px;top:557.3000000000001px">Выдача наличных НД00-000004 от 05.02.2025 18:00:00</div>
<div class="rt" style="left:607.2px;top:557.3000000000001px">28.02.2025</div>
<div class="a" style="left:251px;top:571px;width:599.5px;height:2px;background:#dde2e0"></div>
<div class="a" style="left:605px;top:571px;width:1px;height:29px;background:#d3d5d3"></div>
<div class="rt" style="left:281.5px;top:572.3000000000001px">Списание с расчетного счета НД00-000028 от 05.02.2025<br>18:00:00</div>
<div class="rt" style="left:607.2px;top:572.3000000000001px">28.02.2025</div>
<div class="a" style="left:251px;top:600px;width:599.5px;height:2px;background:#dde2e0"></div>
<div class="a" style="left:605px;top:600px;width:1px;height:29px;background:#d3d5d3"></div>
<div class="rt" style="left:281.5px;top:601.3000000000001px">Списание с расчетного счета НД00-000029 от 05.02.2025<br>18:00:00</div>
<div class="rt" style="left:607.2px;top:601.3000000000001px">28.02.2025</div>
<div class="a" style="left:251px;top:629px;width:599.5px;height:2px;background:#dde2e0"></div>
<div class="a" style="left:251px;top:629.7px;width:599.5px;height:15.0px;background:linear-gradient(90deg,#f3f5f1,#eef2ec)"></div>
<div class="dt" style="left:267.5px;top:631.0px">05.03.2025</div>
<div class="dt" style="right:1072.3px;top:631.0px">22 672</div>
<div class="a" style="left:251px;top:644px;width:599.5px;height:2px;background:#dde2e0"></div>
<div class="a" style="left:605px;top:644px;width:1px;height:15px;background:#d3d5d3"></div>
<div class="rt" style="left:281.5px;top:645.3000000000001px">Ведомость в банк НД00-000007 от 05.03.2025</div>
<div class="rt" style="left:607.2px;top:645.3000000000001px">28.03.2025</div>
<div class="rt" style="right:1072.3px;top:645.5px">5 954</div>
<div class="a" style="left:251px;top:659px;width:599.5px;height:2px;background:#dde2e0"></div>
<div class="a" style="left:605px;top:659px;width:1px;height:15px;background:#d3d5d3"></div>
<div class="rt" style="left:281.5px;top:660.4px">Ведомость в банк НД00-000008 от 05.03.2025</div>
<div class="rt" style="left:607.2px;top:660.4px">28.03.2025</div>
<div class="rt" style="right:1072.3px;top:660.5999999999999px">12 818</div>
<div class="a" style="left:251px;top:674px;width:599.5px;height:2px;background:#dde2e0"></div>
<div class="a" style="left:605px;top:674px;width:1px;height:15px;background:#d3d5d3"></div>
<div class="rt" style="left:281.5px;top:675.2px">Ведомость в кассу НД00-000004 от 05.03.2025</div>
<div class="rt" style="left:607.2px;top:675.2px">28.03.2025</div>
<div class="rt" style="right:1072.3px;top:675.4px">3 900</div>
<div class="a" style="left:251px;top:689px;width:599.5px;height:2px;background:#dde2e0"></div>
<div class="a" style="left:605px;top:689px;width:1px;height:15px;background:#d3d5d3"></div>
<div class="rt" style="left:281.5px;top:690.2px">Выдача наличных НД00-000005 от 05.03.2025 18:00:00</div>
<div class="rt" style="left:607.2px;top:690.2px">28.03.2025</div>
<div class="a" style="left:251px;top:704px;width:599.5px;height:2px;background:#dde2e0"></div>
<div class="a" style="left:605px;top:704px;width:1px;height:30px;background:#d3d5d3"></div>
<div class="rt" style="left:281.5px;top:705.4px">Списание с расчетного счета НД00-000031 от 05.03.2025<br>18:00:00</div>
<div class="rt" style="left:607.2px;top:705.4px">28.03.2025</div>
<div class="a" style="left:251px;top:734px;width:599.5px;height:2px;background:#dde2e0"></div>
<div class="a" style="left:605px;top:734px;width:1px;height:29px;background:#d3d5d3"></div>
<div class="rt" style="left:281.5px;top:734.6px">Списание с расчетного счета НД00-000032 от 05.03.2025<br>18:00:00</div>
<div class="rt" style="left:607.2px;top:734.6px">28.03.2025</div>
<div class="a" style="left:251px;top:763px;width:599.5px;height:2px;background:#dde2e0"></div>
<div class="a" style="left:850px;top:331px;width:1px;height:433px;background:#cdd6cf"></div>
<div class="a" style="left:706px;top:242px;width:148px;height:92px;border:3px solid #ebcd72"></div>
<div class="a" style="left:250px;top:193px;width:1px;height:604px;background:#a9a9ab"></div>
<div class="a" style="left:710px;top:193px;width:1px;height:604px;background:#858587"></div>
<div class="a" style="left:204px;top:244px;width:1px;height:533px;background:#a4a4a6"></div>
<div class="a" style="left:204px;top:776px;width:46px;height:1px;background:#a4a4a6"></div>
<div class="a" style="left:199px;top:234px;width:11px;height:11px;border:1px solid #b0b0b2;border-radius:2px;background:#fff"></div>
<div class="a" style="left:201px;top:238.5px;width:7px;height:2px;background:#8a8a8c"></div>
<div class="a" style="left:217px;top:352px;width:1px;height:412px;background:#a4a4a6"></div>
<div class="a" style="left:217px;top:763px;width:33px;height:1px;background:#a4a4a6"></div>
<div class="a" style="left:212px;top:342px;width:11px;height:11px;border:1px solid #b0b0b2;border-radius:2px;background:#fff"></div>
<div class="a" style="left:214px;top:346.5px;width:7px;height:2px;background:#8a8a8c"></div>
<div class="a" style="left:230px;top:376px;width:1px;height:121px;background:#a4a4a6"></div>
<div class="a" style="left:230px;top:496px;width:20px;height:1px;background:#a4a4a6"></div>
<div class="a" style="left:225px;top:366px;width:11px;height:11px;border:1px solid #b0b0b2;border-radius:2px;background:#fff"></div>
<div class="a" style="left:227px;top:370.5px;width:7px;height:2px;background:#8a8a8c"></div>
<div class="a" style="left:230px;top:509px;width:1px;height:121px;background:#a4a4a6"></div>
<div class="a" style="left:230px;top:629px;width:20px;height:1px;background:#a4a4a6"></div>
<div class="a" style="left:225px;top:499px;width:11px;height:11px;border:1px solid #b0b0b2;border-radius:2px;background:#fff"></div>
<div class="a" style="left:227px;top:503.5px;width:7px;height:2px;background:#8a8a8c"></div>
<div class="a" style="left:230px;top:642px;width:1px;height:122px;background:#a4a4a6"></div>
<div class="a" style="left:230px;top:763px;width:20px;height:1px;background:#a4a4a6"></div>
<div class="a" style="left:225px;top:632px;width:11px;height:11px;border:1px solid #b0b0b2;border-radius:2px;background:#fff"></div>
<div class="a" style="left:227px;top:636.5px;width:7px;height:2px;background:#8a8a8c"></div>
<svg class="a" style="left:1887px;top:200px" width="10" height="8" viewBox="0 0 10 8"><path d="M1 6 H9 L5 1.5Z" fill="#c8c8ca"/></svg>
<div class="a" style="left:1888.5px;top:215px;width:8px;height:572px;border-radius:4px;background:#9b9b9d"></div>
<div class="a" style="left:1888.5px;top:780px;width:8px;height:20px;background:#d4d4d6"></div>
<div class="a" style="left:1888.5px;top:215px;width:8px;height:573px;border-radius:4px;background:#9b9b9d"></div>
<svg class="a" style="left:780px;top:332px" width="32" height="32" viewBox="780 332 32 32"><path d="M790 351.5 L789.5 355 L793 357 L794.5 361.2 L801.8 361.2 L802.5 357 L805.8 354.5 L805.8 349.5 L802.5 347.2 L798.5 349.5 Z" fill="#fff" stroke="#111" stroke-width="1.6" stroke-linejoin="round"/><path d="M798.5 350.5 L803.5 356" stroke="#999" stroke-width="1.2"/><circle cx="793.8" cy="345.6" r="5.6" fill="#ddd" stroke="#111" stroke-width="1.6"/><path d="M791.2 342.5 V348.3 M793.8 341.5 V349 M796.4 342.5 V348.3" stroke="#222" stroke-width="1"/></svg>
<div class="a" style="left:0;top:748px;width:1921px;height:49px;background:linear-gradient(rgba(0,0,0,0),rgba(0,0,0,0.055))"></div>
</body></html>
